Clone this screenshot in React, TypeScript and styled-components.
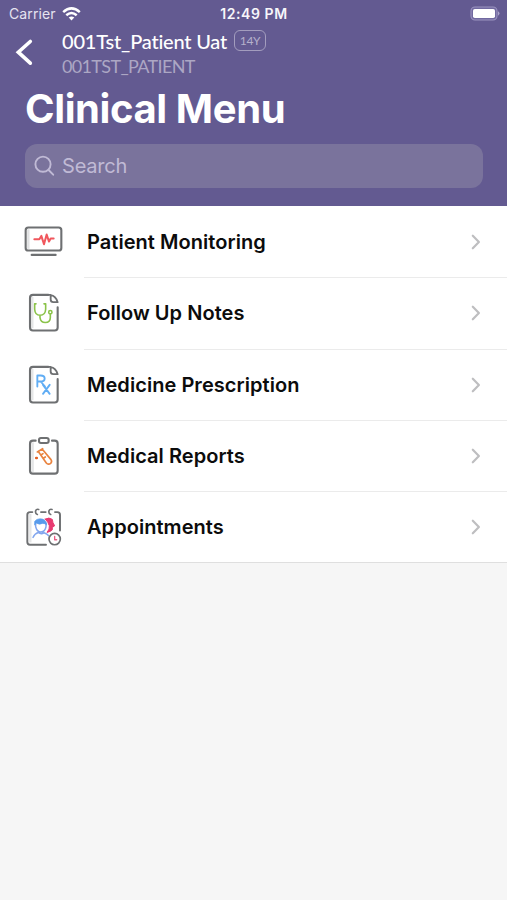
import React from "react";
import styled, { createGlobalStyle } from "styled-components";

const GlobalStyle = createGlobalStyle`
  * { box-sizing: border-box; }
  body { margin: 0; background: #f6f6f6; font-family: Inter, "Liberation Sans", sans-serif; }
`;

const Screen = styled.div`
  min-height: 900px;
  background: #f6f6f6;
  overflow: hidden;
`;

const Header = styled.header`
  height: 206px;
  background: #635a91;
  color: #fff;
`;

const StatusBar = styled.div`
  display: grid;
  grid-template-columns: 1fr auto 1fr;
  align-items: center;
  height: 27px;
  padding: 0 7px 0 9px;
  line-height: 20px;
`;

const Carrier = styled.div`
  display: flex;
  align-items: center;
  gap: 6px;
  font-size: 14px;
  letter-spacing: 0.12px;
  color: #e6e3f0;
`;

const Clock = styled.div`
  font-size: 14px;
  font-weight: 600;
  letter-spacing: 0.55px;
  margin-right: 1px;
  color: #f7f6fa;
`;

const BatterySlot = styled.div`
  display: flex;
  justify-content: flex-end;
`;

const NavBar = styled.div`
  display: flex;
  height: 54px;
  padding-left: 14px;
`;

const BackButton = styled.button`
  width: 48px;
  height: 50px;
  padding: 0;
  border: 0;
  background: none;
  text-align: left;
`;

const Patient = styled.div`
  display: flex;
  flex-direction: column;
  padding-top: 1px;
  font-family: Lato, "Noto Sans", sans-serif;
`;

const PatientLine = styled.div`
  display: flex;
  align-items: center;
  gap: 7px;
  height: 25px;
`;

const PatientName = styled.span`
  font-size: 20px;
  font-weight: 500;
  letter-spacing: -0.2px;
  white-space: nowrap;
`;

const AgeBadge = styled.span`
  display: flex;
  align-items: center;
  justify-content: center;
  width: 32px;
  height: 21px;
  border: 1.5px solid #a39dbe;
  border-radius: 6px;
  font-size: 12px;
  letter-spacing: -0.3px;
  color: #b5b0cb;
`;

const PatientId = styled.div`
  font-size: 18px;
  line-height: 26px;
  letter-spacing: -0.65px;
  color: #aca7c4;
`;

const Title = styled.h1`
  margin: 0 0 0 25px;
  height: 63px;
  font-size: 40px;
  line-height: 56px;
  font-weight: 700;
  letter-spacing: -0.4px;
  white-space: nowrap;
`;

const SearchField = styled.label`
  display: flex;
  align-items: center;
  gap: 7px;
  height: 44px;
  margin: 0 24.5px 0 25px;
  padding-left: 9px;
  border-radius: 12px;
  background: #7a739c;
`;

const SearchInput = styled.input`
  flex: 1;
  padding: 0;
  border: 0;
  outline: 0;
  background: none;
  color: #fff;
  font: 400 20px Inter, sans-serif;
  letter-spacing: -0.2px;
  &::placeholder { color: #c0bad5; opacity: 1; }
`;

const Menu = styled.main`
  background: #fff;
  border-bottom: 1px solid #dfdfdf;
`;

const Row = styled.div`
  display: grid;
  grid-template-columns: 69px 1fr;
  align-items: center;
  height: 71.25px;
  padding-left: 15px;
`;

const RowBody = styled.div<{ $last: boolean }>`
  display: flex;
  align-items: center;
  justify-content: space-between;
  height: 100%;
  padding: 1px 25px 0 3px;
  box-shadow: 0 1px ${(p) => (p.$last ? "transparent" : "#ebebeb")};
`;

const Label = styled.span`
  font-size: 20px;
  font-weight: 600;
  letter-spacing: 0.05px;
  white-space: nowrap;
  color: #0c0c0c;
`;

const IconSvg = styled.svg`
  display: block;
  width: 60px;
  height: 55px;
  fill: none;
  stroke: #6e7072;
  stroke-width: 6.3;
  stroke-linecap: round;
  stroke-linejoin: round;
`;

const MonitorIcon = () => (
  <IconSvg viewBox="0 -2.7 180 165">
    <rect x="32" y="38" width="107" height="69" rx="8" />
    <path d="M40 43V102" stroke="#e0e1e2" strokeWidth="7" strokeLinecap="butt" />
    <path d="M50 120H122" />
    <path d="M58 73H73L79 63L87 88L95 59L102 80L107 71H116" stroke="#f0575d" strokeWidth="6" />
  </IconSvg>
);

const Sheet = () => (
  <>
    <path d="M52 35V129" stroke="#e5e6e7" strokeWidth="7" strokeLinecap="butt" />
    <path d="M100 29H54Q45 29 45 38V127Q45 136 54 136H119Q128 136 128 127V66" />
    <path d="M107 30Q122 32 128 51H115Q107 51 107 43ZM100 29H107" strokeWidth="5.5" />
  </>
);

const NotesIcon = () => (
  <IconSvg viewBox="0 -0.6 180 165">
    <Sheet />
    <g stroke="#8bc34a" strokeWidth="4.8">
      <path d="M63 56H59V72Q60 90 75 90Q91 90 92 72V56H87M75 91V97Q77 112 91 112Q106 112 106 97V87" />
      <circle cx="106" cy="81" r="5" />
    </g>
  </IconSvg>
);

const PrescriptionIcon = () => (
  <IconSvg viewBox="0 -1.5 180 165">
    <g transform="translate(0 -1)"><Sheet /></g>
    <g stroke="#60adf4" strokeWidth="5.6">
      <path d="M67 87V54H77Q89 54 89 63Q89 72 77 72H67M77 72L90 87M84 82L104 109M104 82L84 109" />
    </g>
  </IconSvg>
);

const ReportsIcon = () => (
  <IconSvg viewBox="0 -0.9 180 165">
    <path d="M53 42V131" stroke="#e5e6e7" strokeWidth="7" strokeLinecap="butt" />
    <path d="M62 37H54Q45 37 45 46V127Q45 136 54 136H119Q128 136 128 127V46Q128 37 119 37H111" />
    <rect x="72" y="29" width="29" height="15" rx="6" />
    <g stroke="#e9833f" strokeWidth="5">
      <path d="M67 71L83 61M71 71L94 104Q100 111 107 105Q112 100 108 94L82 63M78 80L84 76M85 90L91 86" />
      <path d="M63.5 89H65.5" stroke="#e45f22" strokeWidth="7.5" />
    </g>
  </IconSvg>
);

const AppointmentsIcon = () => (
  <IconSvg viewBox="0 -3.3 180 165">
    <path d="M46 41V127" stroke="#e5e6e7" strokeWidth="7" strokeLinecap="butt" />
    <g strokeWidth="5.8">
      <path d="M52 36H45Q37 36 37 44V126Q37 134 45 134H93M78 36H92M120 36H127Q135 36 135 44V91" />
      <path d="M67 43Q60 41 62 32Q64 26 71 28M107 43Q100 41 102 32Q104 26 111 28" strokeWidth="5" />
    </g>
    <path d="M91 57Q102 50 112 58L114 68L119 77L112 82V89L105 94L96 97Q105 87 103 77Q100 66 91 57Z" fill="#e83b72" stroke="#e83b72" strokeWidth="3" />
    <path d="M62 70V80Q66 96 78 96Q90 95 93 80V70M54 112Q59 100 70 97Q78 104 87 98Q97 102 101 107" stroke="#82a6ee" strokeWidth="4.4" />
    <path d="M59 74V64Q66 54 82 57Q95 61 95 75Q91 69 82 70Q74 75 63 69Z" fill="#589bec" stroke="#589bec" strokeWidth="2" />
    <circle cx="119" cy="117" r="17" fill="#fff" strokeWidth="5" />
    <path d="M119 109V119H125" stroke="#ea5d86" strokeWidth="4" />
  </IconSvg>
);

const WifiIcon = () => (
  <svg width="19" height="14" viewBox="0 0 19 14" fill="none" stroke="#fff" strokeWidth="2.5">
    <path d="M1.2 5.1Q9.5-2.4 17.8 5.1M4.3 8.3Q9.5 3.7 14.7 8.3" />
    <path d="M9.5 13.4L6.7 10.6Q9.5 8.5 12.3 10.6Z" fill="#fff" stroke="none" />
  </svg>
);

const BatteryIcon = () => (
  <svg width="30" height="15" viewBox="0 0 30 15">
    <rect x="1" y="1" width="26" height="13" rx="4" fill="#7169a0" stroke="#9b93c0" strokeWidth="1.1" />
    <rect x="3" y="3" width="22" height="9" rx="1.8" fill="#fff" />
    <path d="M28 5.3Q31 7.5 28 9.7Z" fill="#aaa3cb" />
  </svg>
);

const Chevron = () => (
  <svg width="12" height="18" viewBox="0 0 12 18" fill="none" stroke="#bebec0" strokeWidth="2.2" strokeLinecap="round" strokeLinejoin="round">
    <path d="M2.8 2.7L8.9 9L2.8 15.3" />
  </svg>
);

const items = [
  { label: "Patient Monitoring", Icon: MonitorIcon },
  { label: "Follow Up Notes", Icon: NotesIcon },
  { label: "Medicine Prescription", Icon: PrescriptionIcon },
  { label: "Medical Reports", Icon: ReportsIcon },
  { label: "Appointments", Icon: AppointmentsIcon },
];

export default function App() {
  return (
    <Screen>
      <GlobalStyle />
      <Header>
        <StatusBar>
          <Carrier>Carrier <WifiIcon /></Carrier>
          <Clock>12:49 PM</Clock>
          <BatterySlot><BatteryIcon /></BatterySlot>
        </StatusBar>
        <NavBar>
          <BackButton aria-label="Back">
            <svg width="24" height="50" viewBox="0 0 24 50" fill="none" stroke="#fff" strokeWidth="3.6" strokeLinecap="round">
              <path d="M16.3 14.5L4.3 25.2L16.3 36.2" />
            </svg>
          </BackButton>
          <Patient>
            <PatientLine>
              <PatientName>001Tst_Patient Uat</PatientName>
              <AgeBadge>14Y</AgeBadge>
            </PatientLine>
            <PatientId>001TST_PATIENT</PatientId>
          </Patient>
        </NavBar>
        <Title>Clinical Menu</Title>
        <SearchField>
          <svg width="21" height="22" viewBox="0 0 21 22" fill="none" stroke="#c0bad5" strokeWidth="1.9" strokeLinecap="round">
            <circle cx="9" cy="9.2" r="7.6" />
            <path d="M14.6 15L19.2 19.7" />
          </svg>
          <SearchInput placeholder="Search" aria-label="Search" />
        </SearchField>
      </Header>
      <Menu>
        {items.map(({ label, Icon }, i) => (
          <Row key={label}>
            <Icon />
            <RowBody $last={i === items.length - 1}>
              <Label>{label}</Label>
              <Chevron />
            </RowBody>
          </Row>
        ))}
      </Menu>
    </Screen>
  );
}
